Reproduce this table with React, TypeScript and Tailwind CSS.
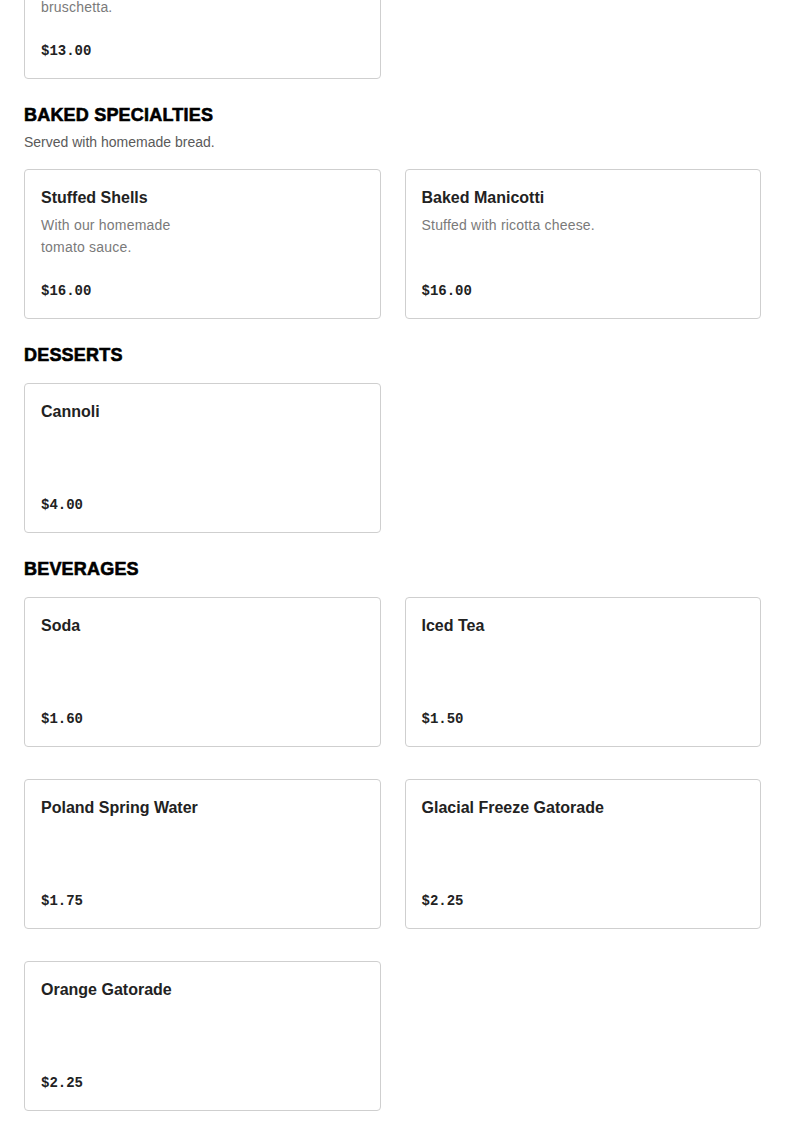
import React from "react";

type Item = { name: string; description?: string[]; price: string };
type Section = { title: string; subtitle?: string; items: Item[] };

const sections: Section[] = [
  {
    title: "APPETIZERS",
    items: [{ name: "Bruschetta", description: ["Toasted bread topped with", "bruschetta."], price: "$13.00" }],
  },
  {
    title: "BAKED SPECIALTIES",
    subtitle: "Served with homemade bread.",
    items: [
      { name: "Stuffed Shells", description: ["With our homemade", "tomato sauce."], price: "$16.00" },
      { name: "Baked Manicotti", description: ["Stuffed with ricotta cheese."], price: "$16.00" },
    ],
  },
  {
    title: "DESSERTS",
    items: [{ name: "Cannoli", price: "$4.00" }],
  },
  {
    title: "BEVERAGES",
    items: [
      { name: "Soda", price: "$1.60" },
      { name: "Iced Tea", price: "$1.50" },
      { name: "Poland Spring Water", price: "$1.75" },
      { name: "Glacial Freeze Gatorade", price: "$2.25" },
      { name: "Orange Gatorade", price: "$2.25" },
    ],
  },
];

function MenuCard({ item }: { item: Item }) {
  return (
    <div className="h-[150px] flex flex-col rounded border border-[#cfcfcf] bg-white px-4 pt-4 pb-[15px]">
      <div className="text-[16px] leading-6 font-bold text-[#222]">{item.name}</div>
      {item.description && (
        <p className="mt-1 text-[14px] leading-[22px] tracking-[0.2px] text-[#7a7a7a]">
          {item.description.map((line, i) => (
            <span key={i} className="block">{line}</span>
          ))}
        </p>
      )}
      <div className="mt-auto text-[14px] leading-6 font-bold text-[#222] font-['Liberation_Mono',monospace]">
        {item.price}
      </div>
    </div>
  );
}

export default function App() {
  return (
    <div className="min-h-screen bg-white font-['Liberation_Sans',Arial,sans-serif] overflow-hidden">
      <div className="-mt-[71px] px-6 pb-10">
        {sections.map((section, idx) => (
          <section key={section.title} className={idx === 0 ? "" : "mt-6"}>
            {idx !== 0 && (
              <div className="mb-4">
                <h2 className="text-[18px] leading-6 font-black tracking-[0.2px] text-black [-webkit-text-stroke:0.6px_black]">
                  {section.title}
                </h2>
                {section.subtitle && (
                  <p className="mt-1 text-[14px] leading-[22px] text-[#5a5a5a]">{section.subtitle}</p>
                )}
              </div>
            )}
            <div className="grid grid-cols-2 gap-x-6 gap-y-8">
              {section.items.map((item) => (
                <MenuCard key={item.name} item={item} />
              ))}
            </div>
          </section>
        ))}
      </div>
    </div>
  );
}
